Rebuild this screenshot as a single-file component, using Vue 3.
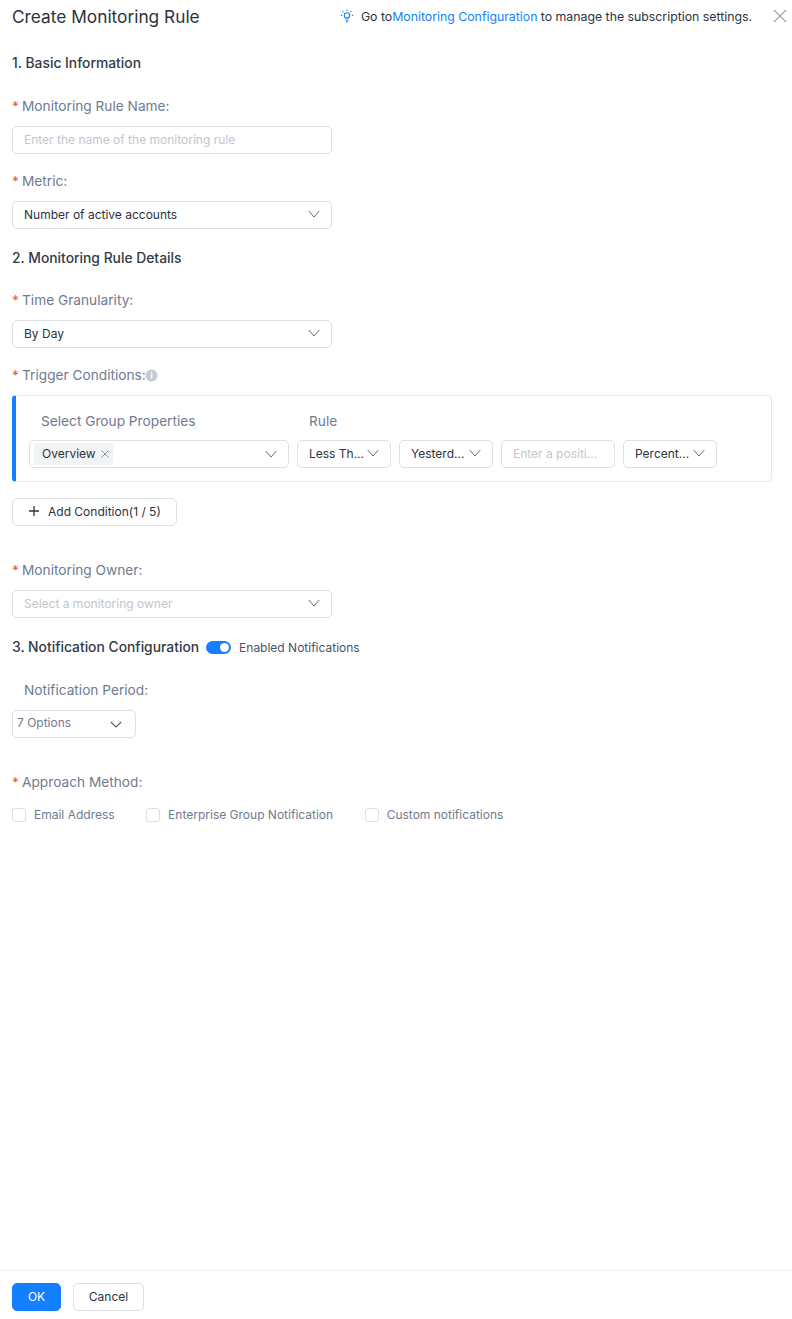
<template>
  <div class="drawer">
    <header class="drawer-head">
      <h1 class="title">Create Monitoring Rule</h1>
      <div class="tip">
        <svg class="bulb" width="14" height="14" viewBox="0 0 14 14" fill="none" stroke="#1480ff" stroke-width="1.1">
          <circle cx="7" cy="6.4" r="2.7" />
          <path d="M5.4 11h3.2M5.9 12.8h2.2" />
          <path d="M7 .6v1.3M2.6 2.2l.9.9M11.4 2.2l-.9.9M.8 6.4h1.3M11.9 6.4h1.3" />
        </svg>
        <span>Go to<a class="link">Monitoring Configuration</a> to manage the subscription settings.</span>
      </div>
      <svg class="close" width="14" height="14" viewBox="0 0 14 14" fill="none" stroke="#9aa3b2" stroke-width="1.1">
        <path d="M1 1l12 12M13 1L1 13" />
      </svg>
    </header>

    <main class="drawer-body">
      <h2 class="section first">1. Basic Information</h2>

      <label class="field-label"><i>*</i>Monitoring Rule Name:</label>
      <input class="control wide" placeholder="Enter the name of the monitoring rule" />

      <label class="field-label"><i>*</i>Metric:</label>
      <div class="control select wide">
        <span>Number of active accounts</span>
        <svg class="chev" width="12" height="8" viewBox="0 0 12 8" fill="none" stroke="#5f6b80" stroke-width="1"><path d="M.7 1l5.3 6 5.3-6" /></svg>
      </div>

      <h2 class="section">2. Monitoring Rule Details</h2>

      <label class="field-label"><i>*</i>Time Granularity:</label>
      <div class="control select wide">
        <span>By Day</span>
        <svg class="chev" width="12" height="8" viewBox="0 0 12 8" fill="none" stroke="#5f6b80" stroke-width="1"><path d="M.7 1l5.3 6 5.3-6" /></svg>
      </div>

      <label class="field-label">
        <i>*</i>Trigger Conditions:<svg class="info" width="13" height="13" viewBox="0 0 13 13"><circle cx="6.5" cy="6.5" r="6" fill="#c5cad3" /><rect x="5.8" y="5.4" width="1.5" height="4.2" fill="#fff" /><rect x="5.8" y="3.2" width="1.5" height="1.4" fill="#fff" /></svg>
      </label>
      <section class="condition">
        <div class="condition-head">
          <span class="col-group">Select Group Properties</span>
          <span>Rule</span>
        </div>
        <div class="condition-row">
          <div class="control select group">
            <span class="tag">Overview
              <svg width="8" height="8" viewBox="0 0 8 8" fill="none" stroke="#8c93a0" stroke-width="1"><path d="M.5.5l7 7M7.5.5l-7 7" /></svg>
            </span>
            <svg class="chev" width="12" height="8" viewBox="0 0 12 8" fill="none" stroke="#5f6b80" stroke-width="1"><path d="M.7 1l5.3 6 5.3-6" /></svg>
          </div>
          <div v-for="item in ruleSelects" :key="item" class="control select small">
            <span>{{ item }}</span>
            <svg class="chev" width="12" height="8" viewBox="0 0 12 8" fill="none" stroke="#5f6b80" stroke-width="1"><path d="M.7 1l5.3 6 5.3-6" /></svg>
          </div>
          <input class="control value" placeholder="Enter a positi..." />
          <div class="control select small">
            <span>Percent...</span>
            <svg class="chev" width="12" height="8" viewBox="0 0 12 8" fill="none" stroke="#5f6b80" stroke-width="1"><path d="M.7 1l5.3 6 5.3-6" /></svg>
          </div>
        </div>
      </section>

      <button class="btn add">
        <svg width="10" height="10" viewBox="0 0 10 10" stroke="#2b3240" stroke-width="1.3"><path d="M5 0v10M0 5h10" /></svg>
        Add Condition(1 / 5)
      </button>

      <label class="field-label owner"><i>*</i>Monitoring Owner:</label>
      <div class="control select wide muted">
        <span>Select a monitoring owner</span>
        <svg class="chev" width="12" height="8" viewBox="0 0 12 8" fill="none" stroke="#5f6b80" stroke-width="1"><path d="M.7 1l5.3 6 5.3-6" /></svg>
      </div>

      <div class="notify-head">
        <h2 class="section inline">3. Notification Configuration</h2>
        <span class="switch"><span class="knob"></span></span>
        <span class="switch-text">Enabled Notifications</span>
      </div>

      <label class="field-label period">Notification Period:</label>
      <div class="control options">
        <span class="options-text">7 Options</span>
        <svg width="12" height="7" viewBox="0 0 12 7" fill="none" stroke="#5a6373" stroke-width="1.2"><path d="M.8 1l5.2 5 5.2-5" /></svg>
      </div>

      <label class="field-label approach"><i>*</i>Approach Method:</label>
      <div class="checks">
        <label v-for="m in methods" :key="m" class="check"><span class="box"></span>{{ m }}</label>
      </div>
    </main>

    <footer class="drawer-foot">
      <button class="btn ok">OK</button>
      <button class="btn cancel">Cancel</button>
    </footer>
  </div>
</template>

<script setup>
const ruleSelects = ['Less Th...', 'Yesterd...']
const methods = ['Email Address', 'Enterprise Group Notification', 'Custom notifications']
</script>

<style scoped>
.drawer {
  box-sizing: border-box;
  color: #2b3240;
  display: flex;
  flex-direction: column;
  font-family: Inter, "Liberation Sans", sans-serif;
  height: 1319px;
  width: 792px;
}

.drawer-head {
  align-items: center;
  display: flex;
  height: 32px;
  padding: 0 5px 0 12px;
}

.title {
  font-size: 17.3px;
  font-weight: 400;
  margin: 0;
}

.tip {
  align-items: center;
  display: flex;
  font-size: 12.3px;
  gap: 7px;
  margin-left: auto;
}

.link {
  color: #1480ff;
}

.close {
  margin-left: 21px;
}

.drawer-body {
  flex: 1;
  padding: 0 12px;
}

.section {
  color: #333a47;
  font-size: 13.85px;
  font-weight: 450;
  line-height: 20px;
  margin: 19px 0 22px;
}

.section.first {
  margin: 21px 0 23px;
}

.section.inline {
  margin: 0;
}

.field-label {
  align-items: center;
  color: #6f7b91;
  display: flex;
  font-size: 13.7px;
  line-height: 20px;
  margin: 17px 0 10px;
}

.field-label i {
  color: #f5524a;
  font-style: normal;
  margin-right: 4px;
  width: 6px;
}

.info {
  margin-left: -1px;
}

.control {
  background: #fff;
  border: 1px solid #dcdfe4;
  border-radius: 5px;
  box-sizing: border-box;
  color: #2b3240;
  display: block;
  font-family: inherit;
  font-size: 12px;
  height: 28px;
  outline: none;
  padding: 0 11px 2px;
}

.control::placeholder {
  color: #c2c6cd;
}

.select {
  align-items: center;
  display: flex;
  justify-content: space-between;
}

.wide {
  width: 320px;
}

.muted {
  color: #c2c6cd;
}

.chev {
  flex: none;
}

.condition {
  border: 1px solid #e8e9ec;
  border-left: 4px solid #1480ff;
  border-radius: 4px;
  box-sizing: border-box;
  height: 87px;
  padding-top: 15px;
  width: 760px;
}

.condition-head {
  color: #6f7b91;
  display: flex;
  font-size: 13.7px;
  line-height: 20px;
  padding-left: 25px;
}

.col-group {
  width: 268px;
}

.condition-row {
  display: flex;
  gap: 8px;
  margin-top: 9px;
  padding-left: 13px;
}

.group {
  padding-left: 4px;
  padding-bottom: 0;
  width: 260px;
}

.tag {
  align-items: center;
  background: #f2f3f5;
  border-radius: 3px;
  display: flex;
  gap: 5px;
  height: 21px;
  padding: 0 4px 1px 8px;
}

.small {
  width: 94px;
}

.value {
  width: 114px;
}

.btn {
  background: #fff;
  border: 1px solid #dcdfe4;
  border-radius: 5px;
  color: #2b3240;
  font-family: inherit;
  font-size: 12px;
  height: 28px;
  padding: 0 0 2px;
}

.add {
  align-items: center;
  display: flex;
  gap: 9px;
  margin-top: 16px;
  padding-left: 16px;
  width: 165px;
}

.owner {
  margin-top: 34px;
}

.notify-head {
  align-items: center;
  display: flex;
  margin: 19px 0 23px;
}

.switch {
  background: #1480ff;
  border-radius: 7px;
  display: block;
  height: 13px;
  margin-left: 7px;
  position: relative;
  width: 25px;
}

.knob {
  background: #fff;
  border-radius: 50%;
  height: 9px;
  position: absolute;
  right: 2px;
  top: 2px;
  width: 9px;
}

.switch-text {
  color: #4a5364;
  font-size: 12px;
  margin-left: 8px;
}

.period {
  margin-left: 12px;
}

.options {
  align-items: center;
  color: #6f7b91;
  display: flex;
  justify-content: space-between;
  padding: 0 13px 0 4px;
  width: 124px;
}

.options-text {
  margin-bottom: 4px;
}

.approach {
  margin-top: 34px;
}

.checks {
  display: flex;
  gap: 31.5px;
  margin-top: 13px;
}

.check {
  align-items: center;
  color: #6f7b91;
  display: flex;
  font-size: 12px;
  gap: 8px;
  line-height: 20px;
}

.box {
  border: 1px solid #dcdfe4;
  border-radius: 3px;
  box-sizing: border-box;
  height: 14px;
  width: 14px;
}

.drawer-foot {
  border-top: 1px solid #eceef0;
  box-sizing: border-box;
  display: flex;
  gap: 12px;
  height: 49px;
  padding-top: 12px;
  padding-left: 12px;
}

.ok {
  background: #1480ff;
  border-color: #1480ff;
  color: #fff;
  width: 49px;
}

.cancel {
  width: 71px;
}
</style>
